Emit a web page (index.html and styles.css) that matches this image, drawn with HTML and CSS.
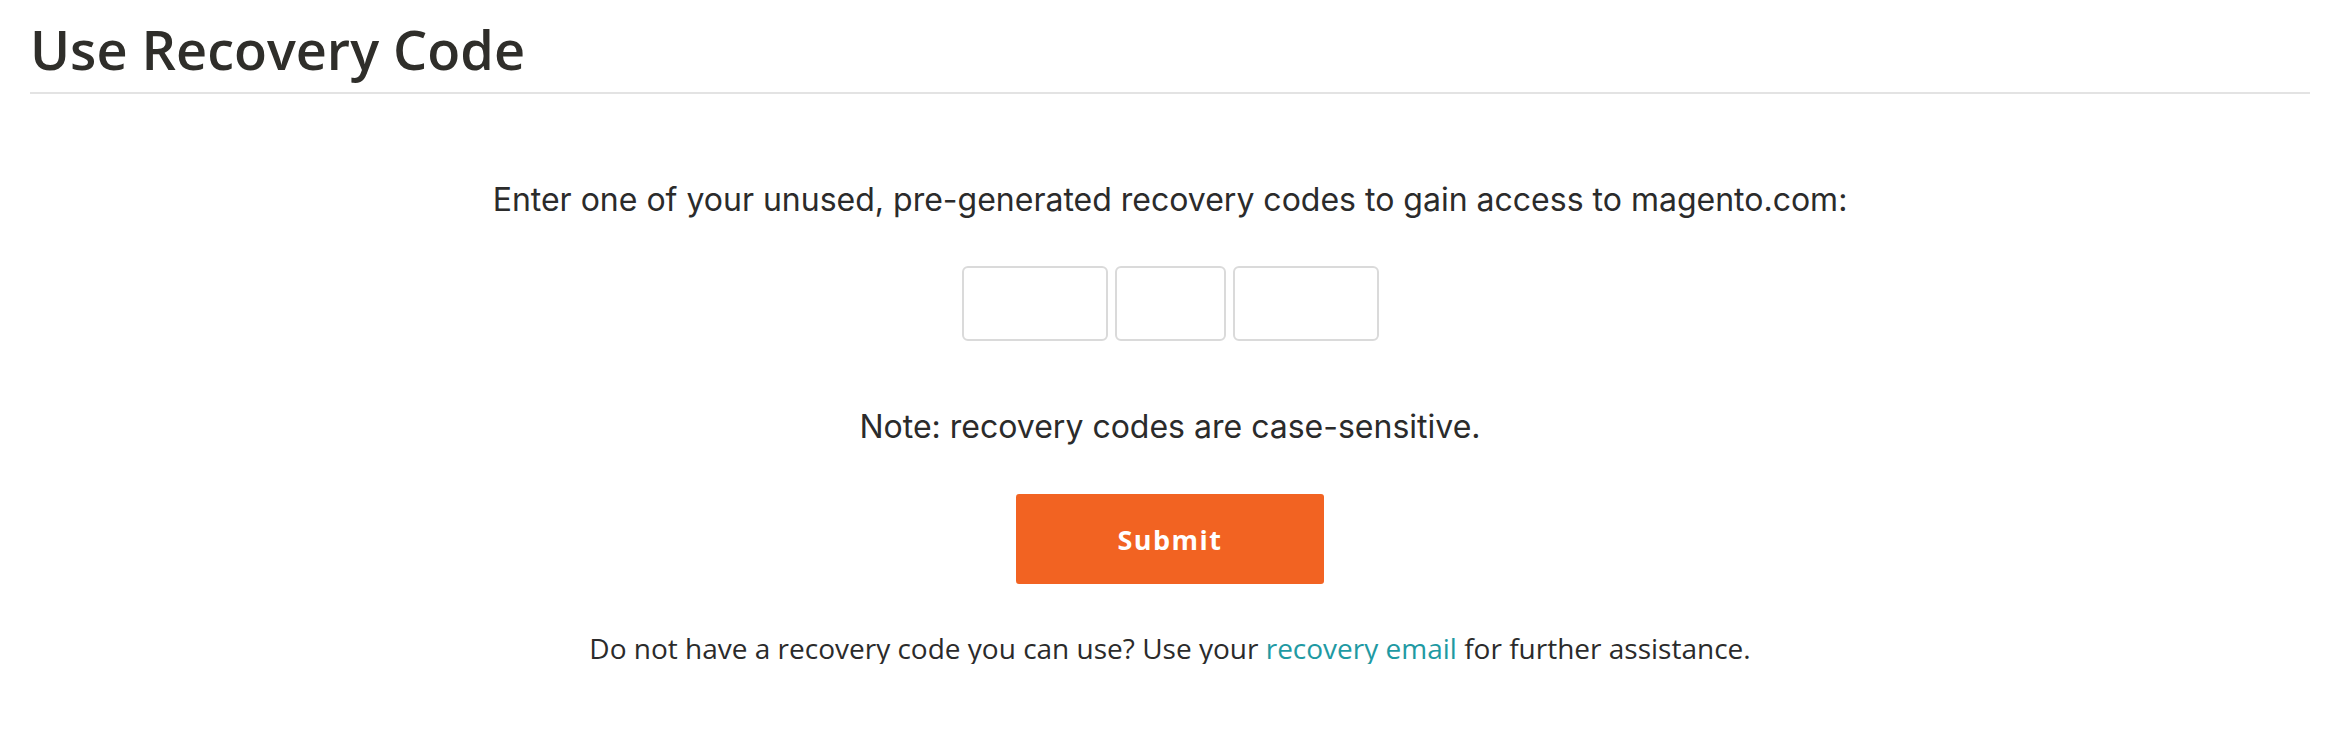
FILE: index.html
```html
<!DOCTYPE html>
<html lang="en">
<head>
<meta charset="utf-8">
<title>Use Recovery Code</title>
<link rel="stylesheet" href="styles.css">
</head>
<body>
<div class="page">
  <h1 class="page-title">Use Recovery Code</h1>
  <div class="content">
    <p class="intro">Enter one of your unused, pre-generated recovery codes to gain access to magento.com:</p>
    <div class="code-fields">
      <input class="code-input code-wide" type="text" aria-label="Code part 1">
      <input class="code-input code-narrow" type="text" aria-label="Code part 2">
      <input class="code-input code-wide" type="text" aria-label="Code part 3">
    </div>
    <p class="note">Note: recovery codes are case-sensitive.</p>
    <button class="submit-btn" type="button">Submit</button>
    <p class="help">Do not have a recovery code you can use? Use your <a href="#" class="help-link">recovery email</a> for further assistance.</p>
  </div>
</div>
</body>
</html>
```
FILE: styles.css
```css
* { box-sizing: border-box; }
html, body { margin: 0; padding: 0; background: #ffffff; }
body { font-family: "Open Sans", "Liberation Sans", sans-serif; color: #303030; }

.page { padding: 0 33px 0 30px; }

.page-title {
  margin: 0;
  padding-top: 18px;
  padding-bottom: 12px;
  font-family: "Open Sans", sans-serif;
  font-weight: 600;
  font-size: 54px;
  line-height: 62px;
  color: #2f2e2a;
  border-bottom: 2px solid #e3e3e3;
}

.content {
  display: flex;
  flex-direction: column;
  align-items: center;
  text-align: center;
}

.intro {
  margin: 88px 0 0;
  font-family: "Inter", "Roboto", sans-serif;
  font-size: 32px;
  line-height: 36px;
  color: #2b2b2b;
}

.code-fields {
  display: flex;
  gap: 7px;
  margin-top: 48px;
}

.code-input {
  height: 75px;
  border: 2px solid #dadada;
  border-radius: 6px;
  background: #fff;
  outline: none;
}
.code-wide { width: 146px; }
.code-narrow { width: 111px; }

.note {
  margin: 68px 0 0;
  font-family: "Inter", "Roboto", sans-serif;
  font-size: 32px;
  line-height: 36px;
  color: #2b2b2b;
}

.submit-btn {
  margin-top: 49px;
  width: 308px;
  height: 90px;
  border: none;
  border-radius: 3px;
  background: #f26322;
  color: #ffffff;
  font-family: "Open Sans", sans-serif;
  font-weight: 700;
  font-size: 27px;
  letter-spacing: 1.5px;
  cursor: pointer;
}

.help {
  margin: 48px 0 0;
  font-family: "Open Sans", sans-serif;
  font-size: 28px;
  line-height: 32px;
  color: #2b2b2b;
}

.help-link {
  color: #1f9aa3;
  text-decoration: none;
}
```
